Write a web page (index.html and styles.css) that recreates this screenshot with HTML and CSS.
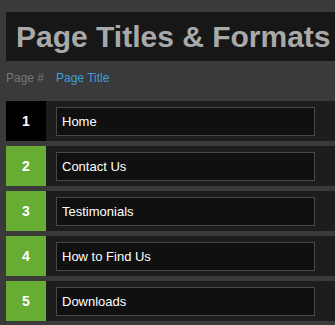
FILE: index.html
```html
<!DOCTYPE html>
<html lang="en">
<head>
  <title>Page Titles &amp; Formats</title>
  <link rel="stylesheet" href="styles.css">
</head>
<body>

  <h1 class="title">Page Titles &amp; Formats</h1>

  <div class="headRow">
    <span class="headNum">Page #</span>
    <span class="headTitle">Page Title</span>
  </div>

  <div id="pageList">
    <div class="pageRow">
      <div class="pageNum current">1</div>
      <input class="pageInput" type="text" value="Home">
    </div>
    <div class="pageRow">
      <div class="pageNum">2</div>
      <input class="pageInput" type="text" value="Contact Us">
    </div>
    <div class="pageRow">
      <div class="pageNum">3</div>
      <input class="pageInput" type="text" value="Testimonials">
    </div>
    <div class="pageRow">
      <div class="pageNum">4</div>
      <input class="pageInput" type="text" value="How to Find Us">
    </div>
    <div class="pageRow">
      <div class="pageNum">5</div>
      <input class="pageInput" type="text" value="Downloads">
    </div>
  </div>

</body>
</html>
```

FILE: styles.css
```css
    body {
      margin: 0;
      padding: 12px 0 0 6px;
      background-color: #3a3a3a;
      font-family: "Liberation Sans", Arial, sans-serif;
      overflow: hidden;
    }

    .title {
      margin: 0;
      height: 49px;
      line-height: 49px;
      padding-left: 10px;
      background-color: #171717;
      color: #a9a9a9;
      font-size: 30px;
      font-weight: bold;
      white-space: nowrap;
      overflow: hidden;
    }

    .headRow {
      display: flex;
      height: 20px;
      line-height: 20px;
      margin: 7px 0 13px 0;
      font-size: 12px;
    }

    .headNum {
      width: 50px;
      color: #767676;
    }

    .headTitle {
      color: #3b9fdb;
    }

    #pageList {
      display: flex;
      flex-direction: column;
      gap: 5px;
    }

    .pageRow {
      display: flex;
      align-items: center;
      height: 40px;
      background-color: #1d1d1d;
    }

    .pageNum {
      width: 40px;
      height: 40px;
      line-height: 40px;
      text-align: center;
      background-color: #67ad34;
      color: white;
      font-size: 14px;
      font-weight: bold;
    }

    .pageNum.current {
      background-color: #000;
    }

    .pageInput {
      box-sizing: border-box;
      margin: 0 0 0 10px;
      width: 259px;
      height: 29px;
      padding: 0 5px;
      border: 1px solid #484848;
      background-color: #101010;
      color: white;
      font-family: "Liberation Sans", Arial, sans-serif;
      font-size: 13px;
      outline: none;
    }
```
